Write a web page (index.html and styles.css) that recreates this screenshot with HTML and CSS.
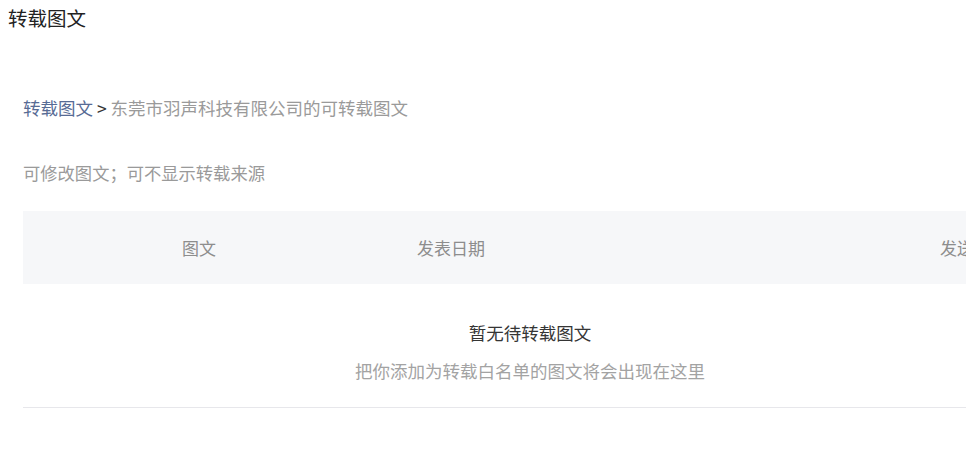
FILE: index.html
```
<!DOCTYPE html>
<html lang="zh-CN">
<head>
<meta charset="utf-8">
<title>转载图文</title>
<link rel="stylesheet" href="styles.css">
</head>
<body>
<h1 class="page-title">转载图文</h1>
<div class="content">
  <div class="breadcrumb"><a class="crumb-link" href="#">转载图文</a><span class="crumb-sep"> &gt; </span><span class="crumb-current">东莞市羽声科技有限公司的可转载图文</span></div>
  <p class="desc">可修改图文；可不显示转载来源</p>
  <div class="table">
    <div class="table-head">
      <div class="th th-article">图文</div>
      <div class="th th-date">发表日期</div>
      <div class="th th-spacer"></div>
      <div class="th th-send">发送时间</div>
    </div>
    <div class="empty">
      <div class="empty-title">暂无待转载图文</div>
      <div class="empty-tip">把你添加为转载白名单的图文将会出现在这里</div>
    </div>
  </div>
</div>
</body>
</html>
```
FILE: styles.css
```
html {
  overflow: hidden;
}
body {
  margin: 8px;
  background: #fff;
  font-family: "Noto Sans CJK SC", "Noto Sans", sans-serif;
  color: #353535;
}
.page-title {
  margin: 0;
  font-size: 19.5px;
  line-height: 20px;
  font-weight: normal;
  color: #222;
}
.content {
  padding-left: 15px;
  padding-top: 68px;
}
.breadcrumb {
  font-size: 17.5px;
  line-height: 24px;
  white-space: nowrap;
}
.crumb-link {
  color: #576b95;
  text-decoration: none;
}
.crumb-sep {
  color: #353535;
}
.crumb-current {
  color: #9a9a9a;
}
.desc {
  margin: 41px 0 0;
  font-size: 17.3px;
  line-height: 24px;
  color: #9a9a9a;
}
.table {
  margin-top: 26px;
  width: calc(100vw - 23px);
  border-bottom: 1px solid #e7e7eb;
}
.table-head {
  display: flex;
  height: 73px;
  align-items: center;
  overflow: hidden;
  background: #f6f7f9;
  font-size: 17px;
  color: #8d8d8d;
}
.th {
  flex: none;
  text-align: center;
  white-space: nowrap;
}
.th-article { width: 352px; }
.th-date { width: 152px; }
.th-spacer { width: 384px; }
.th-send { width: 126px; }
.empty {
  padding: 37px 0 24px 63px;
  text-align: center;
  font-size: 17.5px;
  line-height: 24px;
}
.empty-title {
  color: #353535;
}
.empty-tip {
  margin-top: 14px;
  color: #a3a3a3;
}
```
